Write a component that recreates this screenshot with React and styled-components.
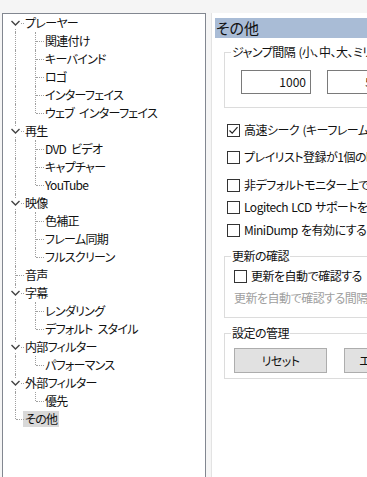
import React from 'react'
import styled, { createGlobalStyle } from 'styled-components'

const GlobalStyle = createGlobalStyle`
  html, body {
    margin: 0;
    padding: 0;
    background: #f5f5f5;
    overflow: hidden;
  }
  body {
    font-family: "Noto Sans CJK JP", "Noto Sans", sans-serif;
    font-size: 12px;
    font-feature-settings: "palt";
    letter-spacing: -0.5px;
    word-spacing: 1px;
    color: #111;
  }
`

const Page = styled.div`
  display: flex;
  align-items: flex-start;
  padding: 13px 0 0 2px;
  gap: 4px;
  width: 600px;
  height: 477px;
  box-sizing: border-box;
`

const TreeBox = styled.div`
  flex: none;
  width: 204px;
  height: 480px;
  box-sizing: border-box;
  border: 1px solid #828790;
  background: #fff;
  padding: 0 0 0 3px;
`

const Row = styled.div`
  display: flex;
  align-items: center;
  height: 18px;
  line-height: 18px;
  white-space: nowrap;
`

const Guide = styled.span`
  position: relative;
  flex: none;
  width: 20px;
  height: 18px;

  &::before {
    content: '';
    display: ${(p) => (p.$v ? 'block' : 'none')};
    position: absolute;
    left: 9px;
    top: ${(p) => (p.$first ? '9px' : '0')};
    height: ${(p) => (p.$last || p.$first ? '9px' : '18px')};
    border-left: 1px dotted #a0a0a0;
  }

  &::after {
    content: '';
    display: ${(p) => (p.$h ? 'block' : 'none')};
    position: absolute;
    left: 10px;
    top: 9px;
    width: 8px;
    border-top: 1px dotted #a0a0a0;
  }
`

const Chevron = styled.svg`
  position: absolute;
  left: 4px;
  top: 4px;
  width: 11px;
  height: 10px;
  background: #fff;
  z-index: 1;
`

const Label = styled.span`
  margin-left: -3px;
  padding: 0 2px;
  line-height: 16px;
  letter-spacing: -0.7px;
  word-spacing: 3px;
  background: ${(p) => (p.$selected ? '#d9d9d9' : 'transparent')};
`

const Panel = styled.div`
  flex: none;
  width: 420px;
  height: 480px;
  box-sizing: border-box;
  margin-left: 1px;
  border-left: 1px solid #e3e3e3;
  background: #fff;
  padding: 5px 0 0 3px;
  overflow: hidden;
`

const Header = styled.div`
  height: 20px;
  line-height: 20px;
  padding-left: 1px;
  background: #a9bcd6;
  font-size: 15px;
  letter-spacing: 0;
`

const Group = styled.fieldset`
  margin: ${(p) => p.$top}px 0 0 9px;
  padding: ${(p) => p.$pad};
  border: 1px solid #dcdcdc;
  min-width: 0;
`

const Legend = styled.legend`
  margin-left: -3px;
  padding: 0 1px;
  line-height: 16px;
  white-space: nowrap;
`

const InputRow = styled.div`
  display: flex;
  gap: 16px;
  margin-top: 10px;
  padding-left: 7px;
`

const TextInput = styled.div`
  flex: none;
  width: 70px;
  height: 24px;
  box-sizing: border-box;
  border: 1px solid #7a7a7a;
  background: #fff;
  text-align: right;
  line-height: 22px;
  padding-right: 4px;
  letter-spacing: 0;
`

const Check = styled.div`
  display: flex;
  align-items: center;
  gap: 4px;
  height: 16px;
  margin: ${(p) => p.$top || 0}px 0 0 ${(p) => p.$left || 0}px;
  white-space: nowrap;
  line-height: 16px;
`

const Box = styled.span`
  flex: none;
  width: 13px;
  height: 13px;
  box-sizing: border-box;
  border: 1px solid #333;
  background: #fff;
  display: flex;
  align-items: center;
  justify-content: center;
`

const Muted = styled.div`
  margin-top: 6px;
  color: #a0a0a0;
  white-space: nowrap;
  line-height: 16px;
`

const Buttons = styled.div`
  display: flex;
  gap: 17px;
  margin-top: 2px;
`

const Button = styled.div`
  flex: none;
  width: 93px;
  height: 25px;
  box-sizing: border-box;
  border: 1px solid #adadad;
  background: #e1e1e1;
  text-align: center;
  line-height: 23px;
`

const tree = [
  { label: 'プレーヤー', children: ['関連付け', 'キーバインド', 'ロゴ', 'インターフェイス', 'ウェブ インターフェイス'] },
  { label: '再生', children: ['DVD ビデオ', 'キャプチャー', 'YouTube'] },
  { label: '映像', children: ['色補正', 'フレーム同期', 'フルスクリーン'] },
  { label: '音声' },
  { label: '字幕', children: ['レンダリング', 'デフォルト スタイル'] },
  { label: '内部フィルター', children: ['パフォーマンス'] },
  { label: '外部フィルター', children: ['優先'] },
  { label: 'その他', selected: true },
]

const ChevronIcon = () => (
  <Chevron viewBox="0 0 11 10">
    <path d="M1.5 3 L5.5 7 L9.5 3" fill="none" stroke="#444" strokeWidth="1.4" />
  </Chevron>
)

const CheckBox = ({ checked, children, top, left }) => (
  <Check $top={top} $left={left}>
    <Box>
      {checked && (
        <svg width="11" height="11" viewBox="0 0 11 11">
          <path d="M1.5 5.5 L4.2 8.2 L9.5 2.2" fill="none" stroke="#222" strokeWidth="1.2" />
        </svg>
      )}
    </Box>
    <span>{children}</span>
  </Check>
)

const Tree = () => (
  <TreeBox>
    {tree.map((node, i) => {
      const first = i === 0
      const last = i === tree.length - 1
      return (
        <React.Fragment key={node.label}>
          <Row>
            <Guide $v $first={first} $last={last} $h>
              {node.children && <ChevronIcon />}
            </Guide>
            <Label $selected={node.selected}>{node.label}</Label>
          </Row>
          {node.children &&
            node.children.map((child, j) => (
              <Row key={child}>
                <Guide $v={!last} />
                <Guide $v $h $last={j === node.children.length - 1} />
                <Label>{child}</Label>
              </Row>
            ))}
        </React.Fragment>
      )
    })}
  </TreeBox>
)

const App = () => (
  <>
    <GlobalStyle />
    <Page>
      <Tree />
      <Panel>
        <Header>その他</Header>

        <Group $top={6} $pad="0 9px 13px">
          <Legend>ジャンプ間隔 (小、中、大、ミリ秒)</Legend>
          <InputRow>
            <TextInput>1000</TextInput>
            <TextInput>5000</TextInput>
            <TextInput>20000</TextInput>
          </InputRow>
        </Group>

        <CheckBox checked top={14} left={12}>高速シーク (キーフレーム上)</CheckBox>
        <CheckBox top={11} left={12}>プレイリスト登録が1個の時はループする</CheckBox>
        <CheckBox top={12} left={12}>非デフォルトモニター上でフルスクリーン時にスクリーンセーバーを防止</CheckBox>
        <CheckBox top={6} left={12}>Logitech LCD サポートを有効にする (実験的)</CheckBox>
        <CheckBox top={7} left={12}>MiniDump を有効にする (デバッグ用)</CheckBox>

        <Group $top={10} $pad="0 9px 11px">
          <Legend>更新の確認</Legend>
          <CheckBox top={4}>更新を自動で確認する</CheckBox>
          <Muted>更新を自動で確認する間隔 (日):</Muted>
        </Group>

        <Group $top={7} $pad="5px 9px 5px">
          <Legend>設定の管理</Legend>
          <Buttons>
            <Button>リセット</Button>
            <Button>エクスポート</Button>
          </Buttons>
        </Group>
      </Panel>
    </Page>
  </>
)

export default App
